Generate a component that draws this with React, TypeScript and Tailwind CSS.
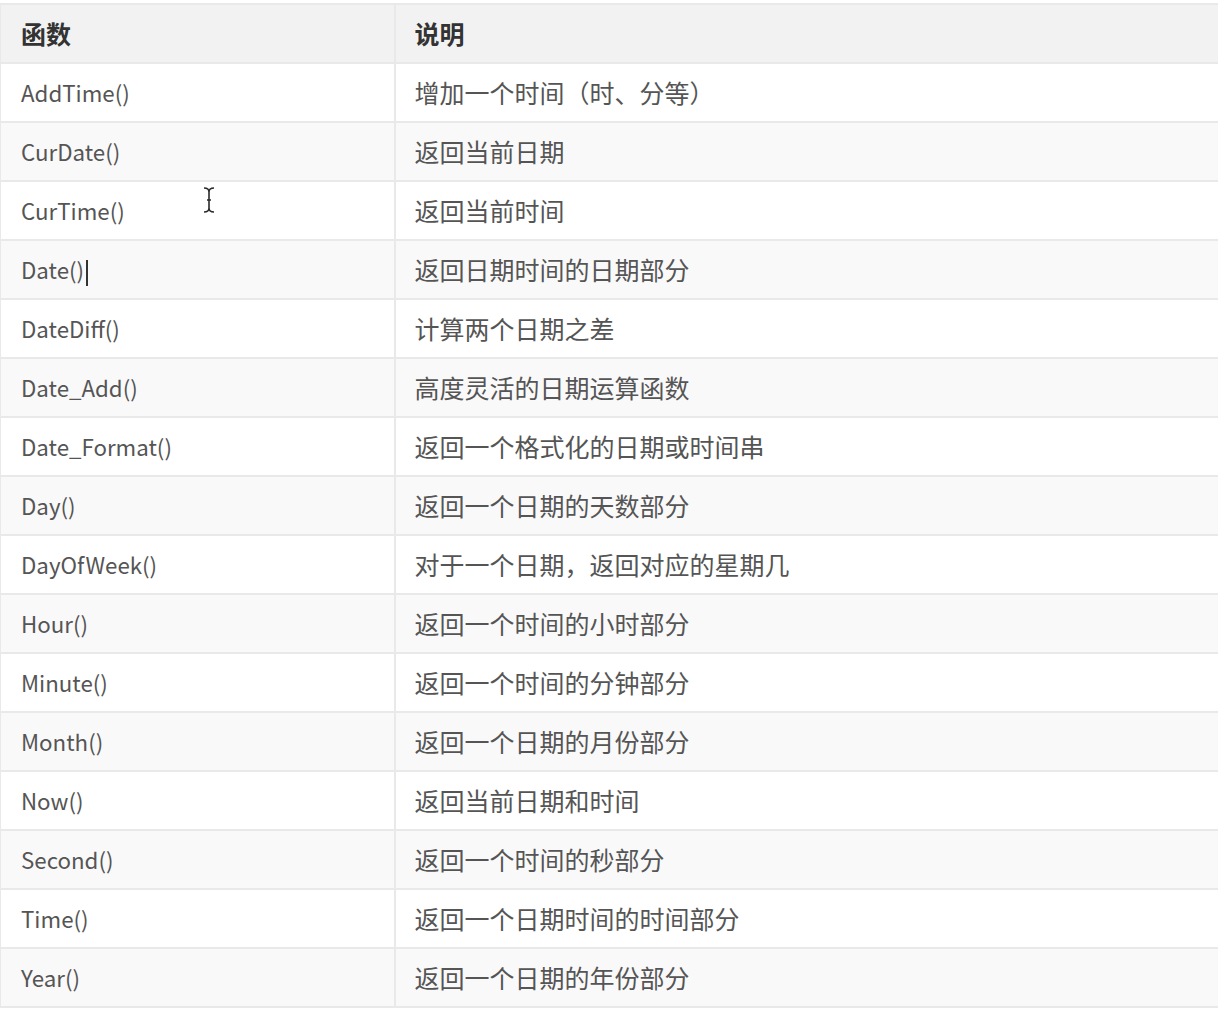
const ROWS: [string, string][] = [
  ['AddTime()', '增加一个时间（时、分等）'],
  ['CurDate()', '返回当前日期'],
  ['CurTime()', '返回当前时间'],
  ['Date()', '返回日期时间的日期部分'],
  ['DateDiff()', '计算两个日期之差'],
  ['Date_Add()', '高度灵活的日期运算函数'],
  ['Date_Format()', '返回一个格式化的日期或时间串'],
  ['Day()', '返回一个日期的天数部分'],
  ['DayOfWeek()', '对于一个日期，返回对应的星期几'],
  ['Hour()', '返回一个时间的小时部分'],
  ['Minute()', '返回一个时间的分钟部分'],
  ['Month()', '返回一个日期的月份部分'],
  ['Now()', '返回当前日期和时间'],
  ['Second()', '返回一个时间的秒部分'],
  ['Time()', '返回一个日期时间的时间部分'],
  ['Year()', '返回一个日期的年份部分'],
]

function IBeam() {
  return (
    <svg className="absolute left-[201px] top-[186px]" width="16" height="28" viewBox="0 0 16 28">
      <path d="M3 2 Q8 2 8 6 L8 22 Q8 26 3 26 M13 2 Q8 2 8 6 M8 22 Q8 26 13 26 M6 14 L10 14" fill="none" stroke="#2a2a2a" strokeWidth="1.6" />
    </svg>
  )
}

export default function App() {
  return (
    <main
      className="relative w-[1218px] h-[1010px] bg-white pt-[3px] overflow-hidden"
      style={{ fontFamily: '"Noto Sans CJK SC", "Noto Sans", sans-serif' }}
    >
      <table className="w-full border-collapse">
        <thead>
          <tr className="bg-[#f2f2f2] h-[59px] border-y-2 border-[#e9e9e9] text-[25px]">
            <th className="w-[394px] pl-[20px] text-left font-bold text-[#333] border-l border-r-2 border-[#e9e9e9]">函数</th>
            <th className="pl-[19px] text-left font-bold text-[#333]">说明</th>
          </tr>
        </thead>
        <tbody>
          {ROWS.map(([fn, desc], i) => (
            <tr key={fn} className={`h-[59px] border-b-2 border-[#e9e9e9] ${i % 2 === 1 ? 'bg-[#faf9fa]' : 'bg-white'}`}>
              <td className="pl-[20px] pt-[1px] text-[22.3px] text-[#555] border-l border-r-2 border-[#e9e9e9]">
                {fn}
                {fn === 'Date()' && <span className="inline-block w-[2px] h-[26px] bg-[#333] align-middle ml-[2px]" />}
              </td>
              <td className="pl-[19px] text-[25px] text-[#555]">{desc}</td>
            </tr>
          ))}
        </tbody>
      </table>
      <IBeam />
    </main>
  )
}
